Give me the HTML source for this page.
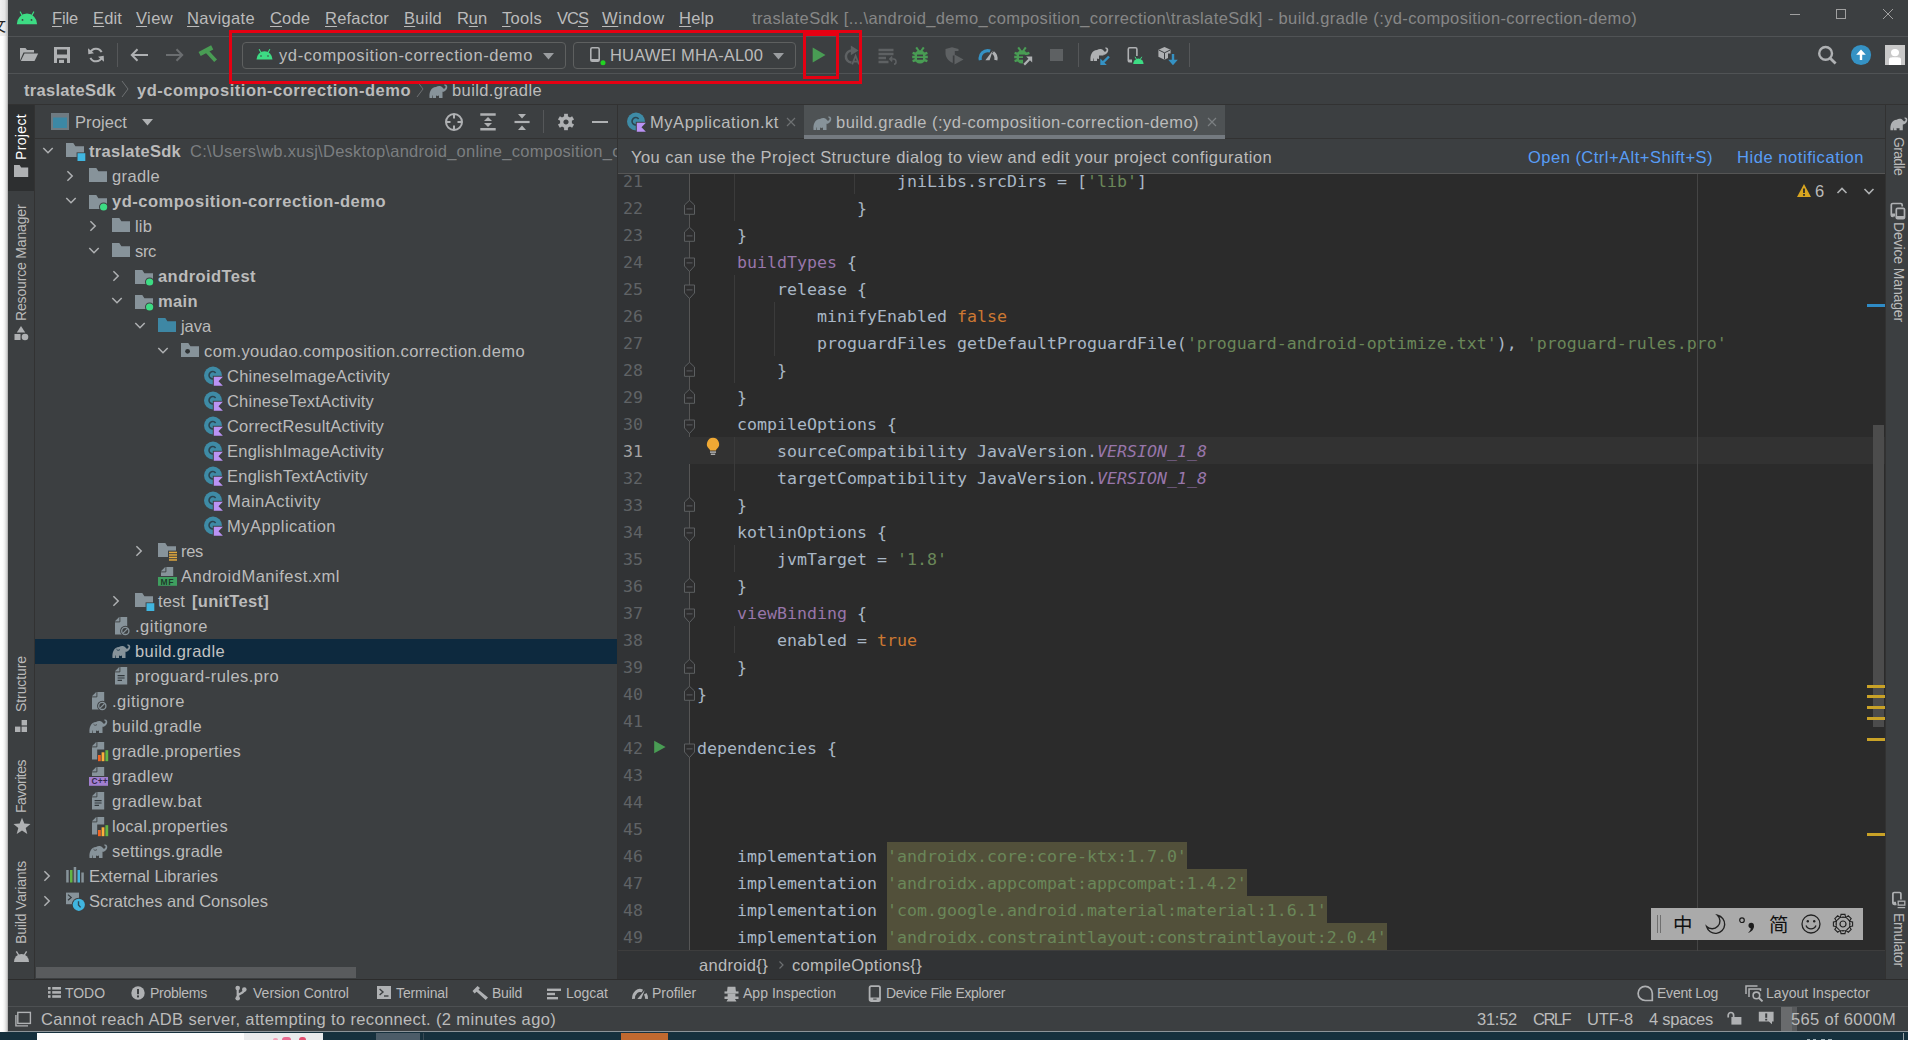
<!DOCTYPE html>
<html><head><meta charset="utf-8"><title>traslateSdk - build.gradle</title><style>
html,body{margin:0;padding:0;background:#3c3f41;}
body{width:1908px;height:1040px;overflow:hidden;position:relative;font-family:"Liberation Sans",sans-serif;}
#r{position:absolute;left:0;top:0;width:1908px;height:1040px;overflow:hidden;}
#r div,#r span,#r svg{position:absolute;}
#r span.t{line-height:24px;height:24px;white-space:pre;}
#r span.c{font-family:"DejaVu Sans Mono","Liberation Mono",monospace;font-size:16.6px;line-height:27px;height:27px;white-space:pre;color:#a9b7c6;letter-spacing:0.007px}
#r span.c i{position:static}
#r span.t u{text-decoration-thickness:1px;text-underline-offset:2px}
</style></head><body><div id="r">
<div style="left:0px;top:0px;width:1908px;height:1040px;background:#3c3f41;"></div>
<div style="left:0px;top:0px;width:8px;height:1032px;background:#ffffff;background:linear-gradient(to right,#ffffff 0,#fdfdfd 35%,#efefef 60%,#d4d4d4 82%,#a8a8a8 100%)"></div>
<div style="left:0px;top:0px;width:8px;height:36px;background:#e9e9e9;background:linear-gradient(to right,#f0f0f0 0,#e6e6e6 60%,#b5b5b5 100%)"></div>
<div style="left:0;top:14px;width:7px;height:22px;overflow:hidden"><span class="t" style="left:-9px;top:0;font-size:15px;color:#222;font-family:'Liberation Sans','Noto Sans CJK SC',sans-serif">文</span></div>
<div style="left:8px;top:36px;width:1900px;height:1px;background:#505355;"></div>
<div style="left:8px;top:73px;width:1900px;height:1px;background:#505355;"></div>
<div style="left:8px;top:104px;width:1900px;height:1px;background:#323232;"></div>
<div style="left:8px;top:105px;width:27px;height:875px;background:#3c3f41;"></div>
<div style="left:8px;top:105px;width:27px;height:86px;background:#2d2f30;"></div>
<div style="left:34px;top:105px;width:1px;height:875px;background:#323232;"></div>
<div style="left:35px;top:138px;width:582px;height:1px;background:#323232;"></div>
<div style="left:617px;top:105px;width:1px;height:875px;background:#323232;"></div>
<div style="left:618px;top:174px;width:1267px;height:777px;background:#2b2b2b;"></div>
<div style="left:618px;top:174px;width:72px;height:777px;background:#313335;"></div>
<div style="left:689px;top:174px;width:1px;height:777px;background:#555555;"></div>
<div style="left:618px;top:138px;width:1267px;height:1px;background:#323232;"></div>
<div style="left:804px;top:105px;width:421px;height:34px;background:#4e5254;"></div>
<div style="left:804px;top:135px;width:421px;height:4px;background:#747a80;"></div>
<div style="left:618px;top:173px;width:1267px;height:1px;background:#555555;"></div>
<div style="left:1885px;top:105px;width:1px;height:875px;background:#323232;"></div>
<div style="left:618px;top:950px;width:1267px;height:1px;background:#3d3d3d;"></div>
<div style="left:618px;top:951px;width:1267px;height:28px;background:#313335;"></div>
<div style="left:8px;top:979px;width:1900px;height:1px;background:#2c2c2c;"></div>
<div style="left:8px;top:1006px;width:1900px;height:1px;background:#4d5052;"></div>
<div style="left:0px;top:1032px;width:1908px;height:8px;background:#16303d;"></div>
<div style="left:8px;top:1031px;width:1900px;height:1px;background:#8d9499;"></div>
<div style="left:37px;top:1033px;width:207px;height:7px;background:#fdfdfd;"></div>
<div style="left:244px;top:1033px;width:79px;height:7px;background:#e9eaec;"></div>
<div style="left:273px;top:1038px;width:5px;height:2px;background:#f3a0b8;border-radius:2px 2px 0 0"></div>
<div style="left:282px;top:1037px;width:9px;height:3px;background:#e86a90;border-radius:4px 4px 0 0"></div>
<div style="left:299px;top:1037px;width:7px;height:3px;background:#e24d6f;border-radius:3px 3px 0 0"></div>
<div style="left:376px;top:1033px;width:44px;height:7px;background:#4c5c68;"></div>
<div style="left:423px;top:1033px;width:1px;height:7px;background:#3a4a55;"></div>
<div style="left:621px;top:1033px;width:47px;height:7px;background:#c1692f;"></div>
<div style="left:1903px;top:1033px;width:1px;height:7px;background:#9aa3a8;"></div>
<div style="left:1807px;top:1039px;width:3px;height:1px;background:#9fb0b8;"></div>
<div style="left:1813px;top:1039px;width:3px;height:1px;background:#9fb0b8;"></div>
<div style="left:1821px;top:1039px;width:4px;height:1px;background:#9fb0b8;"></div>
<div style="left:1828px;top:1039px;width:4px;height:1px;background:#9fb0b8;"></div>
<div style="left:35px;top:639px;width:582px;height:25px;background:#0d293e;"></div>
<svg style="left:41.9px;top:145.0px;" width="12" height="12" viewBox="0 0 12 12"><path d="M1.3 3 L6 7.8 L10.7 3" fill="none" stroke="#afb1b3" stroke-width="1.5"/></svg>
<span class="t" style="left:89px;top:139.0px;font-size:16.5px;letter-spacing:0.277px;color:#bbbbbb;font-weight:bold;">traslateSdk</span>
<div style="left:190px;top:139.0px;width:427px;height:24px;overflow:hidden"><span class="t" style="left:0;top:0;font-size:16.5px;color:#7b7e80;letter-spacing:0.27px">C:\Users\wb.xusj\Desktop\android_online_composition_c</span></div>
<svg style="left:63.7px;top:169.6px;" width="12" height="12" viewBox="0 0 12 12"><path d="M3.4 1.3 L8.2 6 L3.4 10.7" fill="none" stroke="#afb1b3" stroke-width="1.5"/></svg>
<span class="t" style="left:112px;top:164.0px;font-size:16.5px;letter-spacing:0.356px;color:#bbbbbb;">gradle</span>
<svg style="left:64.9px;top:195.0px;" width="12" height="12" viewBox="0 0 12 12"><path d="M1.3 3 L6 7.8 L10.7 3" fill="none" stroke="#afb1b3" stroke-width="1.5"/></svg>
<span class="t" style="left:112px;top:189.0px;font-size:16.5px;letter-spacing:0.517px;color:#bbbbbb;font-weight:bold;">yd-composition-correction-demo</span>
<svg style="left:86.7px;top:219.6px;" width="12" height="12" viewBox="0 0 12 12"><path d="M3.4 1.3 L8.2 6 L3.4 10.7" fill="none" stroke="#afb1b3" stroke-width="1.5"/></svg>
<span class="t" style="left:135px;top:214.0px;font-size:16.5px;letter-spacing:0.164px;color:#bbbbbb;">lib</span>
<svg style="left:87.9px;top:245.0px;" width="12" height="12" viewBox="0 0 12 12"><path d="M1.3 3 L6 7.8 L10.7 3" fill="none" stroke="#afb1b3" stroke-width="1.5"/></svg>
<span class="t" style="left:135px;top:239.0px;font-size:16.5px;letter-spacing:-0.331px;color:#bbbbbb;">src</span>
<svg style="left:109.7px;top:269.59999999999997px;" width="12" height="12" viewBox="0 0 12 12"><path d="M3.4 1.3 L8.2 6 L3.4 10.7" fill="none" stroke="#afb1b3" stroke-width="1.5"/></svg>
<span class="t" style="left:158px;top:264.0px;font-size:16.5px;letter-spacing:0.437px;color:#bbbbbb;font-weight:bold;">androidTest</span>
<svg style="left:110.9px;top:295.0px;" width="12" height="12" viewBox="0 0 12 12"><path d="M1.3 3 L6 7.8 L10.7 3" fill="none" stroke="#afb1b3" stroke-width="1.5"/></svg>
<span class="t" style="left:158px;top:289.0px;font-size:16.5px;letter-spacing:0.373px;color:#bbbbbb;font-weight:bold;">main</span>
<svg style="left:133.9px;top:320.0px;" width="12" height="12" viewBox="0 0 12 12"><path d="M1.3 3 L6 7.8 L10.7 3" fill="none" stroke="#afb1b3" stroke-width="1.5"/></svg>
<span class="t" style="left:181px;top:314.0px;font-size:16.5px;letter-spacing:-0.067px;color:#bbbbbb;">java</span>
<svg style="left:156.9px;top:345.0px;" width="12" height="12" viewBox="0 0 12 12"><path d="M1.3 3 L6 7.8 L10.7 3" fill="none" stroke="#afb1b3" stroke-width="1.5"/></svg>
<span class="t" style="left:204px;top:339.0px;font-size:16.5px;letter-spacing:0.411px;color:#bbbbbb;">com.youdao.composition.correction.demo</span>
<span class="t" style="left:227px;top:364.0px;font-size:16.5px;letter-spacing:0.218px;color:#bbbbbb;">ChineseImageActivity</span>
<span class="t" style="left:227px;top:389.0px;font-size:16.5px;letter-spacing:0.208px;color:#bbbbbb;">ChineseTextActivity</span>
<span class="t" style="left:227px;top:414.0px;font-size:16.5px;letter-spacing:0.185px;color:#bbbbbb;">CorrectResultActivity</span>
<span class="t" style="left:227px;top:439.0px;font-size:16.5px;letter-spacing:0.239px;color:#bbbbbb;">EnglishImageActivity</span>
<span class="t" style="left:227px;top:464.0px;font-size:16.5px;letter-spacing:0.230px;color:#bbbbbb;">EnglishTextActivity</span>
<span class="t" style="left:227px;top:489.0px;font-size:16.5px;letter-spacing:0.499px;color:#bbbbbb;">MainActivity</span>
<span class="t" style="left:227px;top:514.0px;font-size:16.5px;letter-spacing:0.484px;color:#bbbbbb;">MyApplication</span>
<svg style="left:132.7px;top:544.6px;" width="12" height="12" viewBox="0 0 12 12"><path d="M3.4 1.3 L8.2 6 L3.4 10.7" fill="none" stroke="#afb1b3" stroke-width="1.5"/></svg>
<span class="t" style="left:181px;top:539.0px;font-size:16.5px;letter-spacing:-0.307px;color:#bbbbbb;">res</span>
<span class="t" style="left:181px;top:564.0px;font-size:16.5px;letter-spacing:0.502px;color:#bbbbbb;">AndroidManifest.xml</span>
<svg style="left:109.7px;top:594.6px;" width="12" height="12" viewBox="0 0 12 12"><path d="M3.4 1.3 L8.2 6 L3.4 10.7" fill="none" stroke="#afb1b3" stroke-width="1.5"/></svg>
<span class="t" style="left:158px;top:589.0px;font-size:16.5px;letter-spacing:0.102px;color:#bbbbbb;">test</span>
<span class="t" style="left:192px;top:589.0px;font-size:16.5px;letter-spacing:0.308px;color:#bbbbbb;font-weight:bold;">[unitTest]</span>
<span class="t" style="left:135px;top:614.0px;font-size:16.5px;letter-spacing:0.513px;color:#bbbbbb;">.gitignore</span>
<span class="t" style="left:135px;top:639.0px;font-size:16.5px;letter-spacing:0.391px;color:#c2c2c2;">build.gradle</span>
<span class="t" style="left:135px;top:664.0px;font-size:16.5px;letter-spacing:0.460px;color:#bbbbbb;">proguard-rules.pro</span>
<span class="t" style="left:112px;top:689.0px;font-size:16.5px;letter-spacing:0.513px;color:#bbbbbb;">.gitignore</span>
<span class="t" style="left:112px;top:714.0px;font-size:16.5px;letter-spacing:0.391px;color:#bbbbbb;">build.gradle</span>
<span class="t" style="left:112px;top:739.0px;font-size:16.5px;letter-spacing:0.305px;color:#bbbbbb;">gradle.properties</span>
<span class="t" style="left:112px;top:764.0px;font-size:16.5px;letter-spacing:0.460px;color:#bbbbbb;">gradlew</span>
<span class="t" style="left:112px;top:789.0px;font-size:16.5px;letter-spacing:0.510px;color:#bbbbbb;">gradlew.bat</span>
<span class="t" style="left:112px;top:814.0px;font-size:16.5px;letter-spacing:0.257px;color:#bbbbbb;">local.properties</span>
<span class="t" style="left:112px;top:839.0px;font-size:16.5px;letter-spacing:0.246px;color:#bbbbbb;">settings.gradle</span>
<svg style="left:40.7px;top:869.6px;" width="12" height="12" viewBox="0 0 12 12"><path d="M3.4 1.3 L8.2 6 L3.4 10.7" fill="none" stroke="#afb1b3" stroke-width="1.5"/></svg>
<span class="t" style="left:89px;top:864.0px;font-size:16.5px;letter-spacing:0.034px;color:#bbbbbb;">External Libraries</span>
<svg style="left:40.7px;top:894.6px;" width="12" height="12" viewBox="0 0 12 12"><path d="M3.4 1.3 L8.2 6 L3.4 10.7" fill="none" stroke="#afb1b3" stroke-width="1.5"/></svg>
<span class="t" style="left:89px;top:889.0px;font-size:16.5px;letter-spacing:0.007px;color:#bbbbbb;">Scratches and Consoles</span>
<div style="left:36px;top:967px;width:320px;height:11px;background:#595b5d;"></div>
<svg style="left:14px;top:9px;" width="26" height="18" viewBox="0 0 26 18"><path d="M2.8 15.2 A10.15 10.6 0 0 1 23.1 15.2 Z" fill="#3ddc84"/><path d="M6.3 3 L8.6 7.2 M19.7 3 L17.4 7.2" stroke="#3ddc84" stroke-width="1.2" stroke-linecap="round"/><circle cx="8.5" cy="10.9" r="0.9" fill="#3c3f41"/><circle cx="17.5" cy="10.9" r="0.9" fill="#3c3f41"/></svg>
<svg style="left:19px;top:46px;" width="21" height="17" viewBox="0 0 21 17"><path d="M1 2 H6.5 L8 4 H15 V6.5 H4.5 L1 14.5 Z" fill="#afb1b3"/><path d="M5.5 7.5 H19.2 L15.5 15 H1.8 Z" fill="#afb1b3"/></svg>
<svg style="left:53px;top:46px;" width="18" height="18" viewBox="0 0 18 18"><path d="M1 1 H17 V17 H1 Z" fill="#afb1b3"/><rect x="4" y="3.5" width="10" height="5" fill="#3c3f41"/><rect x="4" y="12.3" width="10" height="4.7" fill="#3c3f41"/><rect x="6" y="13.8" width="5" height="3.2" fill="#afb1b3"/></svg>
<svg style="left:86px;top:45px;" width="20" height="20" viewBox="0 0 20 20"><path d="M15.6 7.2 A6.2 6.2 0 0 0 4.2 7.6" fill="none" stroke="#afb1b3" stroke-width="2"/><path d="M2 3.2 L2.3 9.3 L8 8.2 Z" fill="#afb1b3"/><path d="M4.4 12.8 A6.2 6.2 0 0 0 15.8 12.4" fill="none" stroke="#afb1b3" stroke-width="2"/><path d="M18 16.8 L17.7 10.7 L12 11.8 Z" fill="#afb1b3"/></svg>
<svg style="left:129px;top:46px;" width="21" height="18" viewBox="0 0 21 18"><path d="M3 9 H19" stroke="#afb1b3" stroke-width="2"/><path d="M8.5 3.2 L2.8 9 L8.5 14.8" fill="none" stroke="#afb1b3" stroke-width="2"/></svg>
<svg style="left:164px;top:46px;" width="21" height="18" viewBox="0 0 21 18"><path d="M2 9 H18" stroke="#6b6e70" stroke-width="2"/><path d="M12.5 3.2 L18.2 9 L12.5 14.8" fill="none" stroke="#6b6e70" stroke-width="2"/></svg>
<svg style="left:196px;top:44px;" width="23" height="22" viewBox="0 0 23 22"><path d="M3.6 10 L16.2 3.4" stroke="#499c54" stroke-width="4.6"/><path d="M10.6 7 L19.6 16.8" stroke="#499c54" stroke-width="3.8"/></svg>
<svg style="left:255px;top:47px;" width="19" height="15" viewBox="0 0 19 15"><path d="M1.5 12.5 A8 8.3 0 0 1 17.5 12.5 Z" fill="#3ddc84"/><path d="M4.3 2.6 L6.2 6 M14.7 2.6 L12.8 6" stroke="#3ddc84" stroke-width="1.1" stroke-linecap="round"/><circle cx="6" cy="9" r="0.8" fill="#3c3f41"/><circle cx="13" cy="9" r="0.8" fill="#3c3f41"/></svg>
<svg style="left:588px;top:46px;" width="18" height="20" viewBox="0 0 18 20"><rect x="2.8" y="1.8" width="8.4" height="13.4" rx="1.4" fill="none" stroke="#afb1b3" stroke-width="1.6"/><path d="M3 13 H11 V15 H3 Z" fill="#afb1b3"/><circle cx="15" cy="16.8" r="3.2" fill="#3c3f41"/><circle cx="15" cy="16.8" r="2.5" fill="#22d322"/></svg>
<svg style="left:811px;top:46px;" width="17" height="18" viewBox="0 0 17 18"><path d="M1.7 1.5 L14.5 9 L1.7 16.5 Z" fill="#499c54"/></svg>
<svg style="left:839.5px;top:44px;" width="22" height="22" viewBox="0 0 22 22"><path d="M12.5 6.4 A6 6 0 1 0 11.5 18.6" fill="none" stroke="#5e6163" stroke-width="2.5"/><path d="M10.8 1.6 L18.6 6.4 L10.8 11.2 Z" fill="#5e6163"/><path d="M12.2 20.4 L15.6 11.8 L19 20.4 M13.6 17.6 H17.6" fill="none" stroke="#5e6163" stroke-width="1.7"/></svg>
<svg style="left:877px;top:47px;" width="21" height="19" viewBox="0 0 21 19"><path d="M1.5 3 H16.5 M1.5 7 H16.5 M1.5 11 H9 M1.5 15 H11.5" stroke="#5e6163" stroke-width="2.5"/><path d="M17 17.2 C20 16.8 19.6 12 16.5 12 H13 M15.2 9.6 L12.8 12 L15.2 14.4" fill="none" stroke="#5e6163" stroke-width="1.5"/></svg>
<svg style="left:912px;top:45.5px;" width="16" height="19" viewBox="0 0 16 19"><rect x="2.6" y="4.2" width="10.8" height="13.4" rx="5.2" ry="5.6" fill="#499c54"/><path d="M4.2 1.4 L6.8 5 M11.8 1.4 L9.2 5" stroke="#499c54" stroke-width="2.1"/><path d="M0.6 6.8 L4 8 M0.2 11 H4 M0.6 15.2 L4 14 M15.4 6.8 L12 8 M15.8 11 H12 M15.4 15.2 L12 14" stroke="#499c54" stroke-width="2.4"/><rect x="5" y="8.6" width="6" height="1.7" fill="#3c3f41"/><rect x="5" y="12" width="6" height="1.7" fill="#3c3f41"/></svg>
<svg style="left:944px;top:46px;" width="21" height="20" viewBox="0 0 21 20"><path d="M1.5 3 L8 1.2 L14.5 3 V5 H10.8 V9.5 H8.8 V17 C4.5 15 1.5 11.5 1.5 7 Z" fill="#5e6163"/><path d="M10.5 8.5 L19.5 13.5 L10.5 18.5 Z" fill="#5e6163"/></svg>
<svg style="left:978px;top:47px;" width="21" height="15" viewBox="0 0 21 15"><path d="M2.4 13.2 A7.6 7.6 0 0 1 12.2 4" fill="none" stroke="#3592c4" stroke-width="3.2"/><path d="M15 5.4 A7.6 7.6 0 0 1 17.8 13.2" fill="none" stroke="#afb1b3" stroke-width="3.2"/><path d="M7.4 13.2 L14.8 3.4 L11.6 13.2 Z" fill="#afb1b3"/></svg>
<svg style="left:1014px;top:45.5px;" width="20" height="20" viewBox="0 0 20 20"><g><rect x="2.6" y="4.2" width="10.8" height="13.4" rx="5.2" ry="5.6" fill="#499c54"/><path d="M4.2 1.4 L6.8 5 M11.8 1.4 L9.2 5" stroke="#499c54" stroke-width="2.1"/><path d="M0.6 6.8 L4 8 M0.2 11 H4 M0.6 15.2 L4 14 M15.4 6.8 L12 8 M15.8 11 H12 M15.4 15.2 L12 14" stroke="#499c54" stroke-width="2.4"/><rect x="5" y="8.6" width="6" height="1.7" fill="#3c3f41"/><rect x="5" y="12" width="6" height="1.7" fill="#3c3f41"/></g><rect x="9" y="9" width="11" height="11" fill="#3c3f41"/><path d="M10.2 18.6 L16.5 12.3" stroke="#afb1b3" stroke-width="2.2"/><path d="M12.2 10.6 H18.2 V16.6 Z" fill="#afb1b3"/></svg>
<div style="left:1050px;top:49px;width:12.5px;height:12.2px;background:#5e6163;"></div>
<svg style="left:1090px;top:47px;" width="21" height="19" viewBox="0 0 21 19"><path d="M0.5 14 C0 8 2 3.5 7 3 C9 1.5 12 1.5 13.5 3.5 C14.5 5 15.5 5 16.3 3.8 C17 2.8 16.5 1.6 15.5 1.8 L15.2 0.6 C17.5 0 19 2 18 4.5 C17 7 14.5 8 13.5 7.8 L13.5 14 H10 V11.5 C9 12 8 12 7 11.5 V14 H4 V11 C3.5 11.5 3.3 13 3.3 14 Z" fill="#afb1b3"/><rect x="9" y="8.5" width="12" height="10.5" fill="#3c3f41"/><path d="M19 9.5 L12.5 16" stroke="#3592c4" stroke-width="2.4"/><path d="M10.3 11.5 V18 H16.8 Z" fill="#3592c4"/></svg>
<svg style="left:1126px;top:46px;" width="19" height="20" viewBox="0 0 19 20"><rect x="2.3" y="1.8" width="8.6" height="14" rx="1.4" fill="none" stroke="#afb1b3" stroke-width="1.6"/><path d="M2.5 13.5 H7 V15.5 H2.5Z" fill="#afb1b3"/><rect x="6" y="10" width="13" height="9" fill="#3c3f41"/><path d="M7.2 18 A5.2 5.4 0 0 1 17.6 18 Z" fill="#3ddc84"/><path d="M9 10.8 L10.3 13 M15.8 10.8 L14.5 13" stroke="#3ddc84" stroke-width="1"/></svg>
<svg style="left:1157px;top:45.5px;" width="22" height="21" viewBox="0 0 22 21"><path d="M7.5 1 L13.6 3.8 V10.8 L7.5 13.8 L1.4 10.8 V3.8 Z" fill="#afb1b3"/><path d="M1.8 4 L7.5 6.8 L13.2 4 M7.5 6.8 V13.4" fill="none" stroke="#3c3f41" stroke-width="1"/><rect x="11" y="7.5" width="10" height="12" fill="#3c3f41"/><path d="M16 8 V15" stroke="#3592c4" stroke-width="2.4"/><path d="M11.2 13.8 H20.8 L16 19.3 Z" fill="#3592c4"/></svg>
<svg style="left:1815px;top:43px;" width="24" height="24" viewBox="0 0 24 24"><circle cx="10.6" cy="10.4" r="6.4" fill="none" stroke="#afb1b3" stroke-width="2.4"/><path d="M15.2 15.2 L20.6 20.6" stroke="#afb1b3" stroke-width="2.8"/></svg>
<svg style="left:1850px;top:44px;" width="22" height="22" viewBox="0 0 22 22"><circle cx="11" cy="11" r="10.1" fill="#3592c4"/><path d="M11 5.5 L15.8 10.8 H12.2 V16 H9.8 V10.8 H6.2 Z" fill="#ffffff"/></svg>
<svg style="left:1885px;top:45px;" width="20" height="20" viewBox="0 0 20 20"><rect width="20" height="20" fill="#c9c9c9"/><ellipse cx="10" cy="7.6" rx="4" ry="3.7" fill="#ffffff"/><path d="M4 20 V14.5 C4 12.5 6 12.3 10 12.3 C14 12.3 16 12.5 16 14.5 V20 Z" fill="#ffffff"/></svg>
<svg style="left:428.5px;top:83.8px;" width="19" height="14" viewBox="0 0 19 14"><path d="M0.5 14 C0 8 2 3.5 7 3 C9 1.5 12 1.5 13.5 3.5 C14.5 5 15.5 5 16.3 3.8 C17 2.8 16.5 1.6 15.5 1.8 L15.2 0.6 C17.5 0 19 2 18 4.5 C17 7 14.5 8 13.5 7.8 L13.5 14 H10 V11.5 C9 12 8 12 7 11.5 V14 H4 V11 C3.5 11.5 3.3 13 3.3 14 Z" fill="#87939a"/></svg>
<svg style="left:627px;top:110px;" width="20" height="23" viewBox="0 0 20 23"><circle cx="9" cy="11.5" r="9" fill="#3e8ba6"/><path d="M11.6 8.9 A3.7 3.7 0 1 0 11.6 13.6" fill="none" stroke="#2c4450" stroke-width="1.6"/><path d="M8.8 11.8 H19.2 V22.6 H8.8 Z" fill="#3c3f41"/><path d="M9.8 12.8 H18.9 L14.5 17.2 L18.9 21.7 H9.8 Z" fill="#bb93f5"/></svg>
<svg style="left:813px;top:115.5px;" width="19" height="14" viewBox="0 0 19 14"><path d="M0.5 14 C0 8 2 3.5 7 3 C9 1.5 12 1.5 13.5 3.5 C14.5 5 15.5 5 16.3 3.8 C17 2.8 16.5 1.6 15.5 1.8 L15.2 0.6 C17.5 0 19 2 18 4.5 C17 7 14.5 8 13.5 7.8 L13.5 14 H10 V11.5 C9 12 8 12 7 11.5 V14 H4 V11 C3.5 11.5 3.3 13 3.3 14 Z" fill="#87939a"/></svg>
<svg style="left:51px;top:113px;" width="18" height="17" viewBox="0 0 18 17"><rect x="0" y="0" width="18" height="17" fill="#6f7b82"/><rect x="2" y="4.5" width="14" height="10.5" fill="#3c88a5"/></svg>
<svg style="left:443px;top:111px;" width="22" height="22" viewBox="0 0 22 22"><circle cx="11" cy="11" r="8" fill="none" stroke="#afb1b3" stroke-width="2"/><path d="M11 3 V7.5 M11 14.5 V19 M3 11 H7.5 M14.5 11 H19" stroke="#afb1b3" stroke-width="2"/></svg>
<svg style="left:479px;top:112px;" width="18" height="20" viewBox="0 0 18 20"><path d="M1.3 2.5 H16.7 M1.3 17.3 H16.7" stroke="#afb1b3" stroke-width="2.6"/><path d="M5 9 L9 5 L13 9 Z M5 11 L9 15 L13 11 Z" fill="#afb1b3"/></svg>
<svg style="left:513px;top:112px;" width="18" height="20" viewBox="0 0 18 20"><path d="M1.5 10 H16.6" stroke="#afb1b3" stroke-width="2.2"/><path d="M5 2 H13 L9 6.4 Z M5 18 H13 L9 13.6 Z" fill="#afb1b3"/></svg>
<div style="left:543px;top:110px;width:1px;height:23px;background:#555759;"></div>
<svg style="left:556px;top:112px;" width="20" height="20" viewBox="0 0 20 20"><g transform="translate(10,10)"><rect x="-1.9" y="-8.2" width="3.8" height="4" transform="rotate(0)" fill="#afb1b3"/><rect x="-1.9" y="-8.2" width="3.8" height="4" transform="rotate(60)" fill="#afb1b3"/><rect x="-1.9" y="-8.2" width="3.8" height="4" transform="rotate(120)" fill="#afb1b3"/><rect x="-1.9" y="-8.2" width="3.8" height="4" transform="rotate(180)" fill="#afb1b3"/><rect x="-1.9" y="-8.2" width="3.8" height="4" transform="rotate(240)" fill="#afb1b3"/><rect x="-1.9" y="-8.2" width="3.8" height="4" transform="rotate(300)" fill="#afb1b3"/><circle r="4.3" fill="none" stroke="#afb1b3" stroke-width="3.4"/></g></svg>
<div style="left:592px;top:121px;width:16px;height:2px;background:#afb1b3;"></div>
<svg style="left:14px;top:165px;" width="15" height="12" viewBox="0 0 15 12"><path d="M0 0 H5.6 L7.2 2.6 H14.2 V12 H0 Z" fill="#afb1b3"/></svg>
<svg style="left:14px;top:326px;" width="15" height="15" viewBox="0 0 15 15"><path d="M7 0 L11.2 6.4 H2.8 Z" fill="#afb1b3"/><rect x="0.5" y="8" width="6" height="6" fill="#afb1b3"/><circle cx="11" cy="11" r="3.3" fill="#afb1b3"/></svg>
<svg style="left:15px;top:720px;" width="13" height="13" viewBox="0 0 13 13"><rect x="6.6" y="0" width="5.4" height="5.4" fill="#afb1b3"/><rect x="0" y="6.6" width="5.4" height="5.4" fill="#afb1b3"/><rect x="6.6" y="6.6" width="5.4" height="5.4" fill="#afb1b3"/></svg>
<svg style="left:12.5px;top:817px;" width="18" height="18" viewBox="0 0 18 18"><path d="M9 0.8 L11.3 6.6 L17.5 7 L12.7 10.9 L14.3 17 L9 13.6 L3.7 17 L5.3 10.9 L0.5 7 L6.7 6.6 Z" fill="#afb1b3"/></svg>
<svg style="left:13px;top:949px;" width="17" height="14" viewBox="0 0 17 14"><path d="M1 13 A7.5 8 0 0 1 16 13 Z" fill="#afb1b3"/><path d="M3.4 2.4 L5.6 6 M13.6 2.4 L11.4 6" stroke="#afb1b3" stroke-width="1.4"/></svg>
<svg style="left:1889.5px;top:117px;" width="18" height="13.5" viewBox="0 0 19 14.2"><path d="M0.5 14 C0 8 2 3.5 7 3 C9 1.5 12 1.5 13.5 3.5 C14.5 5 15.5 5 16.3 3.8 C17 2.8 16.5 1.6 15.5 1.8 L15.2 0.6 C17.5 0 19 2 18 4.5 C17 7 14.5 8 13.5 7.8 L13.5 14 H10 V11.5 C9 12 8 12 7 11.5 V14 H4 V11 C3.5 11.5 3.3 13 3.3 14 Z" fill="#afb1b3"/></svg>
<svg style="left:1890px;top:202px;" width="17" height="18" viewBox="0 0 17 18"><path d="M3.5 14.5 H2.8 A1.5 1.5 0 0 1 1.3 13 V3 A1.5 1.5 0 0 1 2.8 1.5 H10.7 A1.5 1.5 0 0 1 12.2 3 V4.5" fill="none" stroke="#afb1b3" stroke-width="1.7"/><rect x="6.3" y="6.3" width="8.2" height="10.4" rx="1.3" fill="none" stroke="#afb1b3" stroke-width="1.7"/><path d="M6.5 14 H14.5 V16 H6.5 Z" fill="#afb1b3"/><path d="M1.3 11.5 H5 V14.5 H1.3Z" fill="#afb1b3"/></svg>
<svg style="left:1890px;top:890px;" width="18" height="20" viewBox="0 0 18 20"><path d="M6.5 14.3 H4.2 A1.3 1.3 0 0 1 2.9 13 V3.8 A1.3 1.3 0 0 1 4.2 2.5 H9.6 A1.3 1.3 0 0 1 10.9 3.8 V9.5" fill="none" stroke="#afb1b3" stroke-width="1.7"/><path d="M2.9 11.8 H6 V14.3 H2.9 Z" fill="#afb1b3"/><rect x="8.2" y="11.2" width="6.6" height="3.9" fill="none" stroke="#afb1b3" stroke-width="1.3"/><path d="M7.6 17.6 H15.2" stroke="#afb1b3" stroke-width="1.2"/></svg>
<svg style="left:48px;top:987px;" width="13" height="11" viewBox="0 0 13 11"><rect x="0" y="0.0" width="2.6" height="2.6" fill="#afb1b3"/><rect x="4.2" y="0.0" width="8.8" height="2.6" fill="#afb1b3"/><rect x="0" y="4.1" width="2.6" height="2.6" fill="#afb1b3"/><rect x="4.2" y="4.1" width="8.8" height="2.6" fill="#afb1b3"/><rect x="0" y="8.2" width="2.6" height="2.6" fill="#afb1b3"/><rect x="4.2" y="8.2" width="8.8" height="2.6" fill="#afb1b3"/></svg>
<svg style="left:131px;top:985.5px;" width="14" height="14" viewBox="0 0 14 14"><circle cx="7" cy="7" r="6.7" fill="#afb1b3"/><rect x="6" y="3" width="2" height="5.2" fill="#3c3f41"/><rect x="6" y="9.4" width="2" height="2" fill="#3c3f41"/></svg>
<svg style="left:234px;top:985px;" width="14" height="16" viewBox="0 0 14 16"><circle cx="3.7" cy="3" r="2.3" fill="#afb1b3"/><circle cx="3.7" cy="13.2" r="2.3" fill="#afb1b3"/><circle cx="10.3" cy="4.6" r="2.3" fill="#afb1b3"/><path d="M3.7 3 V13 M10.3 4.6 C10.3 9 3.7 8 3.7 11.5" fill="none" stroke="#afb1b3" stroke-width="2.2"/></svg>
<svg style="left:377px;top:986px;" width="14" height="13" viewBox="0 0 14 13"><rect width="14" height="13" fill="#afb1b3"/><path d="M2.6 3 L6 6 L2.6 9" fill="none" stroke="#3c3f41" stroke-width="1.4"/><path d="M7 10 H11.5" stroke="#3c3f41" stroke-width="1.4"/></svg>
<svg style="left:471px;top:985px;" width="18" height="16" viewBox="0 0 18 16"><path d="M1.5 6 L6.5 1 L9 3 L7.5 4.7 L17 12.6 L14.7 15 L5.6 6.8 L3.6 8.5 Z" fill="#afb1b3"/></svg>
<svg style="left:547px;top:988px;" width="14" height="12" viewBox="0 0 14 12"><rect x="0" y="0.6" width="14" height="2.4" fill="#afb1b3"/><rect x="0" y="4.8" width="8" height="2.4" fill="#afb1b3"/><rect x="0" y="9" width="11" height="2.4" fill="#afb1b3"/></svg>
<svg style="left:631px;top:987px;" width="18" height="13" viewBox="0 0 18 13"><path d="M2.5 11.9 A6.5 8.3 0 0 1 11.4 4 M14.3 6.8 A6.5 8.3 0 0 1 15.5 11.9" fill="none" stroke="#afb1b3" stroke-width="3"/><path d="M6.4 11.9 L13.8 3 L10.2 11.9 Z" fill="#afb1b3"/></svg>
<svg style="left:723.5px;top:985.5px;" width="15" height="16" viewBox="0 0 15 16"><path d="M3.6 0.8 H11.4 L12 6 H3 Z" fill="#afb1b3"/><rect x="0.5" y="5.4" width="14" height="2.2" fill="#afb1b3"/><path d="M3.6 7.6 H11.4 V10.5 H14.5 V13 H11 L12.5 15.5 H2.5 L4 13 H0.5 V10.5 H3.6 Z" fill="#afb1b3"/></svg>
<svg style="left:867.5px;top:984.5px;" width="14" height="17" viewBox="0 0 14 17"><rect x="1.6" y="1.2" width="10.4" height="14.8" rx="1.6" fill="none" stroke="#afb1b3" stroke-width="1.8"/><path d="M2 12.5 H12 V15.5 H2Z" fill="#afb1b3"/><rect x="5.2" y="13.6" width="3.4" height="1" fill="#3c3f41"/></svg>
<svg style="left:1636px;top:985px;" width="18" height="17" viewBox="0 0 18 17"><path d="M9.2 1.3 A7.1 7.1 0 1 0 9.2 15.5 H16.3 V8.4 A7.1 7.1 0 0 0 9.2 1.3 Z" fill="none" stroke="#afb1b3" stroke-width="1.7"/></svg>
<svg style="left:1745px;top:985px;" width="19" height="17" viewBox="0 0 19 17"><path d="M1 9 V1 H12.5 M4 12 V4 H15.5 V6" fill="none" stroke="#afb1b3" stroke-width="1.5"/><circle cx="11.4" cy="10.4" r="3.3" fill="none" stroke="#afb1b3" stroke-width="1.6"/><path d="M13.8 12.8 L17.5 16.4" stroke="#afb1b3" stroke-width="1.9"/></svg>
<svg style="left:15px;top:1011px;" width="17" height="16" viewBox="0 0 17 16"><rect x="2.8" y="1.4" width="12.6" height="11" fill="none" stroke="#afb1b3" stroke-width="1.4"/><path d="M0.9 4 V14.9 H13" fill="none" stroke="#afb1b3" stroke-width="1.4"/></svg>
<svg style="left:1727px;top:1011px;" width="15" height="14" viewBox="0 0 15 14"><rect x="4.4" y="6" width="10" height="7.6" fill="#afb1b3"/><path d="M1.2 6.5 V4.2 A2.7 2.7 0 0 1 6.6 4.2 V6.5" fill="none" stroke="#afb1b3" stroke-width="1.7"/></svg>
<svg style="left:1758px;top:1011px;" width="17" height="14" viewBox="0 0 17 14"><path d="M0.8 0.8 H15.6 V10.6 H14 V13.2 L10.8 10.6 H0.8 Z" fill="#afb1b3"/><rect x="7.2" y="2.4" width="2" height="4.4" fill="#3c3f41"/><rect x="7.2" y="7.8" width="2" height="1.7" fill="#3c3f41"/></svg>
<svg style="left:66px;top:143.4px;" width="20" height="19" viewBox="0 0 20 19"><path d="M0 0 H7.3 L9.4 3.2 H18 V14 H0 Z" fill="#87939a"/><rect x="10.6" y="9.4" width="9.4" height="9.4" fill="#3c3f41"/><rect x="11.5" y="10.2" width="7.8" height="7.8" fill="#40b6e0"/></svg>
<svg style="left:89px;top:168.4px;" width="20" height="19" viewBox="0 0 20 19"><path d="M0 0 H7.3 L9.4 3.2 H18 V14 H0 Z" fill="#87939a"/></svg>
<svg style="left:89px;top:194.9px;" width="20" height="19" viewBox="0 0 20 19"><path d="M0 0 H7.3 L9.4 3.2 H18 V14 H0 Z" fill="#87939a"/><circle cx="14.6" cy="12" r="4.6" fill="#3c3f41"/><circle cx="14.6" cy="12" r="3.6" fill="#3ddc84"/></svg>
<svg style="left:112px;top:218.4px;" width="20" height="19" viewBox="0 0 20 19"><path d="M0 0 H7.3 L9.4 3.2 H18 V14 H0 Z" fill="#87939a"/></svg>
<svg style="left:112px;top:243.4px;" width="20" height="19" viewBox="0 0 20 19"><path d="M0 0 H7.3 L9.4 3.2 H18 V14 H0 Z" fill="#87939a"/></svg>
<svg style="left:135px;top:269.9px;" width="20" height="19" viewBox="0 0 20 19"><path d="M0 0 H7.3 L9.4 3.2 H18 V14 H0 Z" fill="#87939a"/><circle cx="14.6" cy="12" r="4.6" fill="#3c3f41"/><circle cx="14.6" cy="12" r="3.6" fill="#3ddc84"/></svg>
<svg style="left:135px;top:294.9px;" width="20" height="19" viewBox="0 0 20 19"><path d="M0 0 H7.3 L9.4 3.2 H18 V14 H0 Z" fill="#87939a"/><circle cx="14.6" cy="12" r="4.6" fill="#3c3f41"/><circle cx="14.6" cy="12" r="3.6" fill="#3ddc84"/></svg>
<svg style="left:158px;top:318.4px;" width="20" height="19" viewBox="0 0 20 19"><path d="M0 0 H7.3 L9.4 3.2 H18 V14 H0 Z" fill="#3e87a4"/></svg>
<svg style="left:181px;top:343.4px;" width="20" height="19" viewBox="0 0 20 19"><path d="M0 0 H7.3 L9.4 3.2 H18 V14 H0 Z" fill="#87939a"/><circle cx="6.6" cy="8.3" r="2.4" fill="#2f3335"/></svg>
<svg style="left:204px;top:364.4px;" width="20" height="23" viewBox="0 0 20 23"><circle cx="9" cy="11.5" r="9" fill="#3e8ba6"/><path d="M11.6 8.9 A3.7 3.7 0 1 0 11.6 13.6" fill="none" stroke="#2c4450" stroke-width="1.6"/><path d="M8.8 11.8 H19.2 V22.6 H8.8 Z" fill="#3c3f41"/><path d="M9.8 12.8 H18.9 L14.5 17.2 L18.9 21.7 H9.8 Z" fill="#bb93f5"/></svg>
<svg style="left:204px;top:389.4px;" width="20" height="23" viewBox="0 0 20 23"><circle cx="9" cy="11.5" r="9" fill="#3e8ba6"/><path d="M11.6 8.9 A3.7 3.7 0 1 0 11.6 13.6" fill="none" stroke="#2c4450" stroke-width="1.6"/><path d="M8.8 11.8 H19.2 V22.6 H8.8 Z" fill="#3c3f41"/><path d="M9.8 12.8 H18.9 L14.5 17.2 L18.9 21.7 H9.8 Z" fill="#bb93f5"/></svg>
<svg style="left:204px;top:414.4px;" width="20" height="23" viewBox="0 0 20 23"><circle cx="9" cy="11.5" r="9" fill="#3e8ba6"/><path d="M11.6 8.9 A3.7 3.7 0 1 0 11.6 13.6" fill="none" stroke="#2c4450" stroke-width="1.6"/><path d="M8.8 11.8 H19.2 V22.6 H8.8 Z" fill="#3c3f41"/><path d="M9.8 12.8 H18.9 L14.5 17.2 L18.9 21.7 H9.8 Z" fill="#bb93f5"/></svg>
<svg style="left:204px;top:439.4px;" width="20" height="23" viewBox="0 0 20 23"><circle cx="9" cy="11.5" r="9" fill="#3e8ba6"/><path d="M11.6 8.9 A3.7 3.7 0 1 0 11.6 13.6" fill="none" stroke="#2c4450" stroke-width="1.6"/><path d="M8.8 11.8 H19.2 V22.6 H8.8 Z" fill="#3c3f41"/><path d="M9.8 12.8 H18.9 L14.5 17.2 L18.9 21.7 H9.8 Z" fill="#bb93f5"/></svg>
<svg style="left:204px;top:464.4px;" width="20" height="23" viewBox="0 0 20 23"><circle cx="9" cy="11.5" r="9" fill="#3e8ba6"/><path d="M11.6 8.9 A3.7 3.7 0 1 0 11.6 13.6" fill="none" stroke="#2c4450" stroke-width="1.6"/><path d="M8.8 11.8 H19.2 V22.6 H8.8 Z" fill="#3c3f41"/><path d="M9.8 12.8 H18.9 L14.5 17.2 L18.9 21.7 H9.8 Z" fill="#bb93f5"/></svg>
<svg style="left:204px;top:489.4px;" width="20" height="23" viewBox="0 0 20 23"><circle cx="9" cy="11.5" r="9" fill="#3e8ba6"/><path d="M11.6 8.9 A3.7 3.7 0 1 0 11.6 13.6" fill="none" stroke="#2c4450" stroke-width="1.6"/><path d="M8.8 11.8 H19.2 V22.6 H8.8 Z" fill="#3c3f41"/><path d="M9.8 12.8 H18.9 L14.5 17.2 L18.9 21.7 H9.8 Z" fill="#bb93f5"/></svg>
<svg style="left:204px;top:514.4px;" width="20" height="23" viewBox="0 0 20 23"><circle cx="9" cy="11.5" r="9" fill="#3e8ba6"/><path d="M11.6 8.9 A3.7 3.7 0 1 0 11.6 13.6" fill="none" stroke="#2c4450" stroke-width="1.6"/><path d="M8.8 11.8 H19.2 V22.6 H8.8 Z" fill="#3c3f41"/><path d="M9.8 12.8 H18.9 L14.5 17.2 L18.9 21.7 H9.8 Z" fill="#bb93f5"/></svg>
<svg style="left:158px;top:543.4px;" width="20" height="19" viewBox="0 0 20 19"><path d="M0 0 H7.3 L9.4 3.2 H18 V14 H0 Z" fill="#87939a"/><rect x="10" y="7.6" width="10" height="11" fill="#3c3f41"/><rect x="11" y="8.7" width="8" height="1.5" fill="#e2a83e"/><rect x="11" y="11.2" width="8" height="1.5" fill="#e2a83e"/><rect x="11" y="13.7" width="8" height="1.5" fill="#e2a83e"/><rect x="11" y="16.2" width="8" height="1.5" fill="#e2a83e"/></svg>
<svg style="left:160.8px;top:566.8px;" width="13" height="10" viewBox="0 0 13 10"><path d="M4.2 0 H12.2 V9 H0 V4.2 Z" fill="#87939a"/><path d="M0 4.6 L4.6 0 V4.6 Z" fill="#87939a" opacity="0.55"/><path d="M4.9 0 V4.9 H0" fill="none" stroke="#3c3f41" stroke-width="0.9"/></svg>
<svg style="left:158px;top:577.0px;" width="19" height="9" viewBox="0 0 19 9"><rect width="19" height="8.8" fill="#3f9f5f"/><text x="2.6" y="7.6" font-family="Liberation Sans,sans-serif" font-size="8.6" font-weight="bold" fill="#1e3a2a" letter-spacing="0.6">MF</text></svg>
<svg style="left:135px;top:593.4px;" width="20" height="19" viewBox="0 0 20 19"><path d="M0 0 H7.3 L9.4 3.2 H18 V14 H0 Z" fill="#87939a"/><rect x="10.6" y="9.4" width="9.4" height="9.4" fill="#3c3f41"/><rect x="11.5" y="10.2" width="7.8" height="7.8" fill="#40b6e0"/></svg>
<svg style="left:115px;top:616.8px;" width="17" height="20" viewBox="0 0 17 20"><path d="M4.2 0 H12.2 V17.6 H0 V4.2 Z" fill="#87939a"/><path d="M0 4.6 L4.6 0 V4.6 Z" fill="#87939a" opacity="0.55"/><path d="M4.9 0 V4.9 H0" fill="none" stroke="#3c3f41" stroke-width="0.9"/><circle cx="10.3" cy="13.9" r="5.2" fill="#3c3f41"/><circle cx="10.3" cy="13.9" r="3.6" fill="none" stroke="#87939a" stroke-width="1.3"/><path d="M7.8 16.4 L12.8 11.4" stroke="#87939a" stroke-width="1.3"/></svg>
<svg style="left:111.7px;top:643.9px;" width="19" height="14" viewBox="0 0 19 14"><path d="M0.5 14 C0 8 2 3.5 7 3 C9 1.5 12 1.5 13.5 3.5 C14.5 5 15.5 5 16.3 3.8 C17 2.8 16.5 1.6 15.5 1.8 L15.2 0.6 C17.5 0 19 2 18 4.5 C17 7 14.5 8 13.5 7.8 L13.5 14 H10 V11.5 C9 12 8 12 7 11.5 V14 H4 V11 C3.5 11.5 3.3 13 3.3 14 Z" fill="#87939a"/><path d="M4.5 5.2 C5.5 6.6 7 6.6 8 5.4" fill="none" stroke="#0d293e" stroke-width="0.8"/></svg>
<svg style="left:114.6px;top:666.8px;" width="13" height="18" viewBox="0 0 13 18"><path d="M4.2 0 H12.2 V17.6 H0 V4.2 Z" fill="#87939a"/><path d="M0 4.6 L4.6 0 V4.6 Z" fill="#87939a" opacity="0.55"/><path d="M4.9 0 V4.9 H0" fill="none" stroke="#3c3f41" stroke-width="0.9"/><path d="M2.6 8.6 H9.6 M2.6 11 H9.6 M2.6 13.4 H7" stroke="#33393d" stroke-width="1.2"/></svg>
<svg style="left:92px;top:691.8px;" width="17" height="20" viewBox="0 0 17 20"><path d="M4.2 0 H12.2 V17.6 H0 V4.2 Z" fill="#87939a"/><path d="M0 4.6 L4.6 0 V4.6 Z" fill="#87939a" opacity="0.55"/><path d="M4.9 0 V4.9 H0" fill="none" stroke="#3c3f41" stroke-width="0.9"/><circle cx="10.3" cy="13.9" r="5.2" fill="#3c3f41"/><circle cx="10.3" cy="13.9" r="3.6" fill="none" stroke="#87939a" stroke-width="1.3"/><path d="M7.8 16.4 L12.8 11.4" stroke="#87939a" stroke-width="1.3"/></svg>
<svg style="left:88.7px;top:718.9px;" width="19" height="14" viewBox="0 0 19 14"><path d="M0.5 14 C0 8 2 3.5 7 3 C9 1.5 12 1.5 13.5 3.5 C14.5 5 15.5 5 16.3 3.8 C17 2.8 16.5 1.6 15.5 1.8 L15.2 0.6 C17.5 0 19 2 18 4.5 C17 7 14.5 8 13.5 7.8 L13.5 14 H10 V11.5 C9 12 8 12 7 11.5 V14 H4 V11 C3.5 11.5 3.3 13 3.3 14 Z" fill="#87939a"/><path d="M4.5 5.2 C5.5 6.6 7 6.6 8 5.4" fill="none" stroke="#3c3f41" stroke-width="0.8"/></svg>
<svg style="left:92px;top:741.8px;" width="17" height="20" viewBox="0 0 17 20"><path d="M4.2 0 H12.2 V17.6 H0 V4.2 Z" fill="#87939a"/><path d="M0 4.6 L4.6 0 V4.6 Z" fill="#87939a" opacity="0.55"/><path d="M4.9 0 V4.9 H0" fill="none" stroke="#3c3f41" stroke-width="0.9"/><rect x="5.2" y="7.5" width="12" height="12" fill="#3c3f41"/><rect x="6" y="13" width="2.8" height="6.2" fill="#f26522"/><rect x="9.6" y="10.3" width="2.8" height="8.9" fill="#fbb03b"/><rect x="13.4" y="8.2" width="2.8" height="11" fill="#62b543"/></svg>
<svg style="left:91.8px;top:766.8px;" width="13" height="10" viewBox="0 0 13 10"><path d="M4.2 0 H12.2 V9 H0 V4.2 Z" fill="#87939a"/><path d="M0 4.6 L4.6 0 V4.6 Z" fill="#87939a" opacity="0.55"/><path d="M4.9 0 V4.9 H0" fill="none" stroke="#3c3f41" stroke-width="0.9"/></svg>
<svg style="left:89px;top:777.0px;" width="19" height="9" viewBox="0 0 19 9"><rect width="19" height="8.8" fill="#a27fd0"/><text x="2.4" y="7.4" font-family="Liberation Sans,sans-serif" font-size="8.4" font-weight="bold" fill="#33284a" letter-spacing="0.2">C++</text></svg>
<svg style="left:91.6px;top:791.8px;" width="13" height="18" viewBox="0 0 13 18"><path d="M4.2 0 H12.2 V17.6 H0 V4.2 Z" fill="#87939a"/><path d="M0 4.6 L4.6 0 V4.6 Z" fill="#87939a" opacity="0.55"/><path d="M4.9 0 V4.9 H0" fill="none" stroke="#3c3f41" stroke-width="0.9"/><path d="M2.6 8.6 H9.6 M2.6 11 H9.6 M2.6 13.4 H7" stroke="#33393d" stroke-width="1.2"/></svg>
<svg style="left:92px;top:816.8px;" width="17" height="20" viewBox="0 0 17 20"><path d="M4.2 0 H12.2 V17.6 H0 V4.2 Z" fill="#87939a"/><path d="M0 4.6 L4.6 0 V4.6 Z" fill="#87939a" opacity="0.55"/><path d="M4.9 0 V4.9 H0" fill="none" stroke="#3c3f41" stroke-width="0.9"/><rect x="5.2" y="7.5" width="12" height="12" fill="#3c3f41"/><rect x="6" y="13" width="2.8" height="6.2" fill="#f26522"/><rect x="9.6" y="10.3" width="2.8" height="8.9" fill="#fbb03b"/><rect x="13.4" y="8.2" width="2.8" height="11" fill="#62b543"/></svg>
<svg style="left:88.7px;top:843.9px;" width="19" height="14" viewBox="0 0 19 14"><path d="M0.5 14 C0 8 2 3.5 7 3 C9 1.5 12 1.5 13.5 3.5 C14.5 5 15.5 5 16.3 3.8 C17 2.8 16.5 1.6 15.5 1.8 L15.2 0.6 C17.5 0 19 2 18 4.5 C17 7 14.5 8 13.5 7.8 L13.5 14 H10 V11.5 C9 12 8 12 7 11.5 V14 H4 V11 C3.5 11.5 3.3 13 3.3 14 Z" fill="#87939a"/><path d="M4.5 5.2 C5.5 6.6 7 6.6 8 5.4" fill="none" stroke="#3c3f41" stroke-width="0.8"/></svg>
<svg style="left:66px;top:866.6px;" width="19" height="16" viewBox="0 0 19 16"><rect x="0.2" y="3" width="2.5" height="12.5" fill="#87939a"/><rect x="4" y="3" width="2.5" height="12.5" fill="#62b543"/><rect x="7.7" y="0" width="2.5" height="15.5" fill="#87939a"/><rect x="11.5" y="3" width="2.5" height="12.5" fill="#40b6e0"/><rect x="15.3" y="5.5" width="2.5" height="10.0" fill="#87939a"/></svg>
<svg style="left:66px;top:891.6px;" width="20" height="21" viewBox="0 0 20 21"><rect x="0" y="0.6" width="13" height="11.6" fill="#87939a"/><path d="M2 2.6 L5.2 5.4 L2 8.2" fill="none" stroke="#33393d" stroke-width="1.2"/><circle cx="12.8" cy="12.8" r="7.1" fill="#3c3f41"/><circle cx="12.8" cy="12.8" r="6.1" fill="#40b6e0"/><path d="M12.5 9.2 V13 L14.6 15.4" fill="none" stroke="#2c4a58" stroke-width="1.4"/></svg>
<div style="left:690px;top:437px;width:1195px;height:27px;background:#323232;"></div>
<div style="left:618px;top:437px;width:72px;height:27px;background:#313335;"></div>
<div style="left:1697px;top:174px;width:1px;height:777px;background:#454545;"></div>
<div style="left:887px;top:842px;width:300px;height:27px;background:#52503a;"></div>
<div style="left:887px;top:869px;width:360px;height:27px;background:#52503a;"></div>
<div style="left:887px;top:896px;width:440px;height:27px;background:#52503a;"></div>
<div style="left:887px;top:923px;width:500px;height:27px;background:#52503a;"></div>
<div style="left:734px;top:174px;width:1px;height:47px;background:#3b3b3b;"></div>
<div style="left:854px;top:174px;width:1px;height:20px;background:#3b3b3b;"></div>
<div style="left:734px;top:275px;width:1px;height:108px;background:#3b3b3b;"></div>
<div style="left:774px;top:302px;width:1px;height:54px;background:#3b3b3b;"></div>
<div style="left:734px;top:437px;width:1px;height:54px;background:#3b3b3b;"></div>
<div style="left:734px;top:545px;width:1px;height:27px;background:#3b3b3b;"></div>
<div style="left:734px;top:626px;width:1px;height:27px;background:#3b3b3b;"></div>
<div style="left:618px;top:174px;width:1267px;height:777px;overflow:hidden">
<span class="c" style="left:5px;top:-6px;width:20px;text-align:right;color:#606366">21</span>
<span class="c" style="left:79px;top:-6px">                    jniLibs.srcDirs = [<i style="font-style:normal;color:#6a8759;">'lib'</i>]</span>
<span class="c" style="left:5px;top:21px;width:20px;text-align:right;color:#606366">22</span>
<span class="c" style="left:79px;top:21px">                }</span>
<span class="c" style="left:5px;top:48px;width:20px;text-align:right;color:#606366">23</span>
<span class="c" style="left:79px;top:48px">    }</span>
<span class="c" style="left:5px;top:75px;width:20px;text-align:right;color:#606366">24</span>
<span class="c" style="left:79px;top:75px">    <i style="font-style:normal;color:#9876aa;">buildTypes</i> {</span>
<span class="c" style="left:5px;top:102px;width:20px;text-align:right;color:#606366">25</span>
<span class="c" style="left:79px;top:102px">        release {</span>
<span class="c" style="left:5px;top:129px;width:20px;text-align:right;color:#606366">26</span>
<span class="c" style="left:79px;top:129px">            minifyEnabled <i style="font-style:normal;color:#cc7832;">false</i></span>
<span class="c" style="left:5px;top:156px;width:20px;text-align:right;color:#606366">27</span>
<span class="c" style="left:79px;top:156px">            proguardFiles getDefaultProguardFile(<i style="font-style:normal;color:#6a8759;">'proguard-android-optimize.txt'</i>), <i style="font-style:normal;color:#6a8759;">'proguard-rules.pro'</i></span>
<span class="c" style="left:5px;top:183px;width:20px;text-align:right;color:#606366">28</span>
<span class="c" style="left:79px;top:183px">        }</span>
<span class="c" style="left:5px;top:210px;width:20px;text-align:right;color:#606366">29</span>
<span class="c" style="left:79px;top:210px">    }</span>
<span class="c" style="left:5px;top:237px;width:20px;text-align:right;color:#606366">30</span>
<span class="c" style="left:79px;top:237px">    compileOptions {</span>
<span class="c" style="left:5px;top:264px;width:20px;text-align:right;color:#a4a3a3">31</span>
<span class="c" style="left:79px;top:264px">        sourceCompatibility JavaVersion.<i style="color:#9876aa;font-style:italic;">VERSION_1_8</i></span>
<span class="c" style="left:5px;top:291px;width:20px;text-align:right;color:#606366">32</span>
<span class="c" style="left:79px;top:291px">        targetCompatibility JavaVersion.<i style="color:#9876aa;font-style:italic;">VERSION_1_8</i></span>
<span class="c" style="left:5px;top:318px;width:20px;text-align:right;color:#606366">33</span>
<span class="c" style="left:79px;top:318px">    }</span>
<span class="c" style="left:5px;top:345px;width:20px;text-align:right;color:#606366">34</span>
<span class="c" style="left:79px;top:345px">    kotlinOptions {</span>
<span class="c" style="left:5px;top:372px;width:20px;text-align:right;color:#606366">35</span>
<span class="c" style="left:79px;top:372px">        jvmTarget = <i style="font-style:normal;color:#6a8759;">'1.8'</i></span>
<span class="c" style="left:5px;top:399px;width:20px;text-align:right;color:#606366">36</span>
<span class="c" style="left:79px;top:399px">    }</span>
<span class="c" style="left:5px;top:426px;width:20px;text-align:right;color:#606366">37</span>
<span class="c" style="left:79px;top:426px">    <i style="font-style:normal;color:#9876aa;">viewBinding</i> {</span>
<span class="c" style="left:5px;top:453px;width:20px;text-align:right;color:#606366">38</span>
<span class="c" style="left:79px;top:453px">        enabled = <i style="font-style:normal;color:#cc7832;">true</i></span>
<span class="c" style="left:5px;top:480px;width:20px;text-align:right;color:#606366">39</span>
<span class="c" style="left:79px;top:480px">    }</span>
<span class="c" style="left:5px;top:507px;width:20px;text-align:right;color:#606366">40</span>
<span class="c" style="left:79px;top:507px">}</span>
<span class="c" style="left:5px;top:534px;width:20px;text-align:right;color:#606366">41</span>
<span class="c" style="left:5px;top:561px;width:20px;text-align:right;color:#606366">42</span>
<span class="c" style="left:79px;top:561px">dependencies {</span>
<span class="c" style="left:5px;top:588px;width:20px;text-align:right;color:#606366">43</span>
<span class="c" style="left:5px;top:615px;width:20px;text-align:right;color:#606366">44</span>
<span class="c" style="left:5px;top:642px;width:20px;text-align:right;color:#606366">45</span>
<span class="c" style="left:5px;top:669px;width:20px;text-align:right;color:#606366">46</span>
<span class="c" style="left:79px;top:669px">    implementation <i style="font-style:normal;color:#6a8759;">'androidx.core:core-ktx:1.7.0'</i></span>
<span class="c" style="left:5px;top:696px;width:20px;text-align:right;color:#606366">47</span>
<span class="c" style="left:79px;top:696px">    implementation <i style="font-style:normal;color:#6a8759;">'androidx.appcompat:appcompat:1.4.2'</i></span>
<span class="c" style="left:5px;top:723px;width:20px;text-align:right;color:#606366">48</span>
<span class="c" style="left:79px;top:723px">    implementation <i style="font-style:normal;color:#6a8759;">'com.google.android.material:material:1.6.1'</i></span>
<span class="c" style="left:5px;top:750px;width:20px;text-align:right;color:#606366">49</span>
<span class="c" style="left:79px;top:750px">    implementation <i style="font-style:normal;color:#6a8759;">'androidx.constraintlayout:constraintlayout:2.0.4'</i></span>
</div>
<svg style="left:683px;top:197.5px;" width="13" height="22" viewBox="0 0 13 22"><g transform="translate(6.5,10)"><path d="M-5 6.3 H5 V-3 L0 -7.7 L-5 -3 Z" fill="#2d2d2e" stroke="#5c5f61" stroke-width="1"/><path d="M-3 0.9 H3" stroke="#5c5f61" stroke-width="1"/></g></svg>
<svg style="left:683px;top:224.5px;" width="13" height="22" viewBox="0 0 13 22"><g transform="translate(6.5,10)"><path d="M-5 6.3 H5 V-3 L0 -7.7 L-5 -3 Z" fill="#2d2d2e" stroke="#5c5f61" stroke-width="1"/><path d="M-3 0.9 H3" stroke="#5c5f61" stroke-width="1"/></g></svg>
<svg style="left:683px;top:359.5px;" width="13" height="22" viewBox="0 0 13 22"><g transform="translate(6.5,10)"><path d="M-5 6.3 H5 V-3 L0 -7.7 L-5 -3 Z" fill="#2d2d2e" stroke="#5c5f61" stroke-width="1"/><path d="M-3 0.9 H3" stroke="#5c5f61" stroke-width="1"/></g></svg>
<svg style="left:683px;top:386.5px;" width="13" height="22" viewBox="0 0 13 22"><g transform="translate(6.5,10)"><path d="M-5 6.3 H5 V-3 L0 -7.7 L-5 -3 Z" fill="#2d2d2e" stroke="#5c5f61" stroke-width="1"/><path d="M-3 0.9 H3" stroke="#5c5f61" stroke-width="1"/></g></svg>
<svg style="left:683px;top:494.5px;" width="13" height="22" viewBox="0 0 13 22"><g transform="translate(6.5,10)"><path d="M-5 6.3 H5 V-3 L0 -7.7 L-5 -3 Z" fill="#2d2d2e" stroke="#5c5f61" stroke-width="1"/><path d="M-3 0.9 H3" stroke="#5c5f61" stroke-width="1"/></g></svg>
<svg style="left:683px;top:575.5px;" width="13" height="22" viewBox="0 0 13 22"><g transform="translate(6.5,10)"><path d="M-5 6.3 H5 V-3 L0 -7.7 L-5 -3 Z" fill="#2d2d2e" stroke="#5c5f61" stroke-width="1"/><path d="M-3 0.9 H3" stroke="#5c5f61" stroke-width="1"/></g></svg>
<svg style="left:683px;top:656.5px;" width="13" height="22" viewBox="0 0 13 22"><g transform="translate(6.5,10)"><path d="M-5 6.3 H5 V-3 L0 -7.7 L-5 -3 Z" fill="#2d2d2e" stroke="#5c5f61" stroke-width="1"/><path d="M-3 0.9 H3" stroke="#5c5f61" stroke-width="1"/></g></svg>
<svg style="left:683px;top:683.5px;" width="13" height="22" viewBox="0 0 13 22"><g transform="translate(6.5,10)"><path d="M-5 6.3 H5 V-3 L0 -7.7 L-5 -3 Z" fill="#2d2d2e" stroke="#5c5f61" stroke-width="1"/><path d="M-3 0.9 H3" stroke="#5c5f61" stroke-width="1"/></g></svg>
<svg style="left:683px;top:251.5px;" width="13" height="22" viewBox="0 0 13 22"><g transform="translate(6.5,10)"><path d="M-5 -4 H5 V4 L0 9.5 L-5 4 Z" fill="#2d2d2e" stroke="#5c5f61" stroke-width="1"/><path d="M-3 0.9 H3" stroke="#5c5f61" stroke-width="1"/></g></svg>
<svg style="left:683px;top:278.5px;" width="13" height="22" viewBox="0 0 13 22"><g transform="translate(6.5,10)"><path d="M-5 -4 H5 V4 L0 9.5 L-5 4 Z" fill="#2d2d2e" stroke="#5c5f61" stroke-width="1"/><path d="M-3 0.9 H3" stroke="#5c5f61" stroke-width="1"/></g></svg>
<svg style="left:683px;top:413.5px;" width="13" height="22" viewBox="0 0 13 22"><g transform="translate(6.5,10)"><path d="M-5 -4 H5 V4 L0 9.5 L-5 4 Z" fill="#2d2d2e" stroke="#5c5f61" stroke-width="1"/><path d="M-3 0.9 H3" stroke="#5c5f61" stroke-width="1"/></g></svg>
<svg style="left:683px;top:521.5px;" width="13" height="22" viewBox="0 0 13 22"><g transform="translate(6.5,10)"><path d="M-5 -4 H5 V4 L0 9.5 L-5 4 Z" fill="#2d2d2e" stroke="#5c5f61" stroke-width="1"/><path d="M-3 0.9 H3" stroke="#5c5f61" stroke-width="1"/></g></svg>
<svg style="left:683px;top:602.5px;" width="13" height="22" viewBox="0 0 13 22"><g transform="translate(6.5,10)"><path d="M-5 -4 H5 V4 L0 9.5 L-5 4 Z" fill="#2d2d2e" stroke="#5c5f61" stroke-width="1"/><path d="M-3 0.9 H3" stroke="#5c5f61" stroke-width="1"/></g></svg>
<svg style="left:683px;top:737.5px;" width="13" height="22" viewBox="0 0 13 22"><g transform="translate(6.5,10)"><path d="M-5 -4 H5 V4 L0 9.5 L-5 4 Z" fill="#2d2d2e" stroke="#5c5f61" stroke-width="1"/><path d="M-3 0.9 H3" stroke="#5c5f61" stroke-width="1"/></g></svg>
<div style="left:1873px;top:425px;width:11px;height:302px;background:#4c4c4c;"></div>
<div style="left:1867px;top:685px;width:18px;height:3px;background:#c9a227;"></div>
<div style="left:1867px;top:695px;width:18px;height:3px;background:#c9a227;"></div>
<div style="left:1867px;top:706px;width:18px;height:3px;background:#c9a227;"></div>
<div style="left:1867px;top:717px;width:18px;height:3px;background:#c9a227;"></div>
<div style="left:1867px;top:738px;width:18px;height:3px;background:#c9a227;"></div>
<div style="left:1867px;top:833px;width:18px;height:3px;background:#c9a227;"></div>
<div style="left:1867px;top:304px;width:18px;height:3px;background:#2f8bc6;"></div>
<span class="t" style="left:52px;top:5.5px;font-size:16.5px;letter-spacing:-0.146px;color:#bbbbbb"><u>F</u>ile</span>
<span class="t" style="left:93px;top:5.5px;font-size:16.5px;letter-spacing:0.142px;color:#bbbbbb"><u>E</u>dit</span>
<span class="t" style="left:136px;top:5.5px;font-size:16.5px;letter-spacing:0.384px;color:#bbbbbb"><u>V</u>iew</span>
<span class="t" style="left:187px;top:5.5px;font-size:16.5px;letter-spacing:0.360px;color:#bbbbbb"><u>N</u>avigate</span>
<span class="t" style="left:270px;top:5.5px;font-size:16.5px;letter-spacing:0.139px;color:#bbbbbb"><u>C</u>ode</span>
<span class="t" style="left:325px;top:5.5px;font-size:16.5px;letter-spacing:0.206px;color:#bbbbbb"><u>R</u>efactor</span>
<span class="t" style="left:404px;top:5.5px;font-size:16.5px;letter-spacing:0.262px;color:#bbbbbb"><u>B</u>uild</span>
<span class="t" style="left:457px;top:5.5px;font-size:16.5px;letter-spacing:-0.089px;color:#bbbbbb">R<u>u</u>n</span>
<span class="t" style="left:502px;top:5.5px;font-size:16.5px;letter-spacing:0.297px;color:#bbbbbb"><u>T</u>ools</span>
<span class="t" style="left:557px;top:5.5px;font-size:16.5px;letter-spacing:-0.976px;color:#bbbbbb">VC<u>S</u></span>
<span class="t" style="left:602px;top:5.5px;font-size:16.5px;letter-spacing:0.719px;color:#bbbbbb"><u>W</u>indow</span>
<span class="t" style="left:679px;top:5.5px;font-size:16.5px;letter-spacing:0.267px;color:#bbbbbb"><u>H</u>elp</span>
<span class="t" style="left:752px;top:5.5px;font-size:16.5px;letter-spacing:0.379px;color:#878787;">traslateSdk [...\android_demo_composition_correction\traslateSdk] - build.gradle (:yd-composition-correction-demo)</span>
<svg style="left:1783px;top:8px;" width="24" height="14" viewBox="0 0 24 14"><path d="M7 6.5 H17" stroke="#a0a0a0" stroke-width="1"/></svg>
<svg style="left:1830px;top:5px;" width="22" height="18" viewBox="0 0 22 18"><rect x="6.5" y="4.5" width="9" height="9" fill="none" stroke="#a0a0a0" stroke-width="1"/></svg>
<svg style="left:1877px;top:5px;" width="22" height="18" viewBox="0 0 22 18"><path d="M6 4 L16 14 M16 4 L6 14" stroke="#a0a0a0" stroke-width="1"/></svg>
<div style="left:242px;top:42px;width:324px;height:27px;background:transparent;border:1px solid #5e6060;border-radius:4px;box-sizing:border-box"></div>
<div style="left:573px;top:42px;width:223px;height:27px;background:transparent;border:1px solid #5e6060;border-radius:4px;box-sizing:border-box"></div>
<span class="t" style="left:279px;top:43px;font-size:16.5px;letter-spacing:0.611px;color:#bbbbbb;">yd-composition-correction-demo</span>
<span class="t" style="left:610px;top:43px;font-size:16.5px;letter-spacing:0.155px;color:#bbbbbb;">HUAWEI MHA-AL00</span>
<svg style="left:541.5px;top:51.5px;" width="14" height="9" viewBox="0 0 14 9"><path d="M1 1 H12 L6.5 7.5 Z" fill="#9a9da0"/></svg>
<svg style="left:772px;top:51.5px;" width="14" height="9" viewBox="0 0 14 9"><path d="M1 1 H12 L6.5 7.5 Z" fill="#9a9da0"/></svg>
<div style="left:117px;top:43px;width:1px;height:24px;background:#555759;"></div>
<div style="left:1078px;top:43px;width:1px;height:24px;background:#555759;"></div>
<div style="left:1189px;top:43px;width:1px;height:24px;background:#555759;"></div>
<span class="t" style="left:24px;top:77.5px;font-size:16.5px;letter-spacing:0.277px;color:#bbbbbb;font-weight:bold;">traslateSdk</span>
<span class="t" style="left:137px;top:77.5px;font-size:16.5px;letter-spacing:0.517px;color:#bbbbbb;font-weight:bold;">yd-composition-correction-demo</span>
<span class="t" style="left:452px;top:77.5px;font-size:16.5px;letter-spacing:0.391px;color:#bbbbbb;">build.gradle</span>
<svg style="left:119px;top:79px;" width="12" height="20" viewBox="0 0 12 20"><path d="M3 2 L9 10 L3 18" fill="none" stroke="#6d7072" stroke-width="1"/></svg>
<svg style="left:414px;top:79px;" width="12" height="20" viewBox="0 0 12 20"><path d="M3 2 L9 10 L3 18" fill="none" stroke="#6d7072" stroke-width="1"/></svg>
<span class="t" style="left:75px;top:109.5px;font-size:16.5px;letter-spacing:0.093px;color:#bbbbbb;">Project</span>
<svg style="left:141px;top:118px;" width="14" height="9" viewBox="0 0 14 9"><path d="M1 1 H12 L6.5 7.5 Z" fill="#afb1b3"/></svg>
<span class="t" style="left:650px;top:110px;font-size:16.5px;letter-spacing:0.555px;color:#bbbbbb;">MyApplication.kt</span>
<span class="t" style="left:836px;top:110px;font-size:16.5px;letter-spacing:0.476px;color:#bbbbbb;">build.gradle (:yd-composition-correction-demo)</span>
<svg style="left:785px;top:116px;" width="12" height="12" viewBox="0 0 12 12"><path d="M2 2 L10 10 M10 2 L2 10" stroke="#6e7173" stroke-width="1.2"/></svg>
<svg style="left:1206px;top:116px;" width="12" height="12" viewBox="0 0 12 12"><path d="M2 2 L10 10 M10 2 L2 10" stroke="#7b7f82" stroke-width="1.2"/></svg>
<span class="t" style="left:631px;top:144.5px;font-size:16.5px;letter-spacing:0.454px;color:#bbbbbb;">You can use the Project Structure dialog to view and edit your project configuration</span>
<span class="t" style="left:1528px;top:144.5px;font-size:16.5px;letter-spacing:0.488px;color:#589df6;">Open (Ctrl+Alt+Shift+S)</span>
<span class="t" style="left:1737px;top:144.5px;font-size:16.5px;letter-spacing:0.565px;color:#589df6;">Hide notification</span>
<svg style="left:1796px;top:183px;" width="16" height="15" viewBox="0 0 16 15"><path d="M8 1 L15 14 H1 Z" fill="#d8a520"/><path d="M8 5.5 V10" stroke="#2b2b2b" stroke-width="1.8"/><rect x="7.1" y="11" width="1.8" height="1.8" fill="#2b2b2b"/></svg>
<span class="t" style="left:1815px;top:179px;font-size:16.5px;color:#bbbbbb;">6</span>
<svg style="left:1836px;top:185px;" width="12" height="12" viewBox="0 0 12 12"><path d="M1.5 8 L6 3.5 L10.5 8" fill="none" stroke="#afb1b3" stroke-width="1.6"/></svg>
<svg style="left:1863px;top:185px;" width="12" height="12" viewBox="0 0 12 12"><path d="M1.5 4 L6 8.5 L10.5 4" fill="none" stroke="#afb1b3" stroke-width="1.6"/></svg>
<span class="t" style="left:699px;top:953px;font-size:16.5px;letter-spacing:0.326px;color:#bbbbbb;">android{}</span>
<span class="t" style="left:792px;top:953px;font-size:16.5px;letter-spacing:0.329px;color:#bbbbbb;">compileOptions{}</span>
<svg style="left:776px;top:959px;" width="10" height="12" viewBox="0 0 10 12"><path d="M3.5 2.5 L7 6 L3.5 9.5" fill="none" stroke="#6d7072" stroke-width="1.2"/></svg>
<span class="t" style="left:65px;top:981px;font-size:14px;letter-spacing:-0.047px;color:#bbbbbb;">TODO</span>
<span class="t" style="left:150px;top:981px;font-size:14px;letter-spacing:-0.266px;color:#bbbbbb;">Problems</span>
<span class="t" style="left:253px;top:981px;font-size:14px;letter-spacing:0.019px;color:#bbbbbb;">Version Control</span>
<span class="t" style="left:396px;top:981px;font-size:14px;letter-spacing:-0.113px;color:#bbbbbb;">Terminal</span>
<span class="t" style="left:492px;top:981px;font-size:14px;letter-spacing:-0.226px;color:#bbbbbb;">Build</span>
<span class="t" style="left:566px;top:981px;font-size:14px;letter-spacing:-0.005px;color:#bbbbbb;">Logcat</span>
<span class="t" style="left:652px;top:981px;font-size:14px;letter-spacing:-0.043px;color:#bbbbbb;">Profiler</span>
<span class="t" style="left:743px;top:981px;font-size:14px;letter-spacing:0.028px;color:#bbbbbb;">App Inspection</span>
<span class="t" style="left:886px;top:981px;font-size:14px;letter-spacing:-0.313px;color:#bbbbbb;">Device File Explorer</span>
<span class="t" style="left:1657px;top:981px;font-size:14px;letter-spacing:-0.227px;color:#bbbbbb;">Event Log</span>
<span class="t" style="left:1766px;top:981px;font-size:14px;letter-spacing:0.031px;color:#bbbbbb;">Layout Inspector</span>
<span class="t" style="left:41px;top:1007px;font-size:16.5px;letter-spacing:0.361px;color:#bbbbbb;">Cannot reach ADB server, attempting to reconnect. (2 minutes ago)</span>
<span class="t" style="left:1477px;top:1007px;font-size:16.5px;letter-spacing:-0.257px;color:#bbbbbb;">31:52</span>
<span class="t" style="left:1533px;top:1007px;font-size:16.5px;letter-spacing:-1.521px;color:#bbbbbb;">CRLF</span>
<span class="t" style="left:1587px;top:1007px;font-size:16.5px;letter-spacing:-0.148px;color:#bbbbbb;">UTF-8</span>
<span class="t" style="left:1649px;top:1007px;font-size:16.5px;letter-spacing:-0.255px;color:#bbbbbb;">4 spaces</span>
<div style="left:1781px;top:1007px;width:10.5px;height:24px;background:#696b6d;"></div>
<div style="left:1791.5px;top:1007px;width:5px;height:24px;background:#595b5d;"></div>
<span class="t" style="left:1791px;top:1007px;font-size:16.5px;letter-spacing:0.342px;color:#bbbbbb;">565 of 6000M</span>
<span class="t" style="left:21px;top:160px;font-size:14px;letter-spacing:0.347px;color:#ffffff;transform-origin:0 0;transform:rotate(-90deg) translate(0,-12px)">Project</span>
<span class="t" style="left:21px;top:321px;font-size:14px;letter-spacing:-0.160px;color:#bbbbbb;transform-origin:0 0;transform:rotate(-90deg) translate(0,-12px)">Resource Manager</span>
<span class="t" style="left:21px;top:712px;font-size:14px;letter-spacing:-0.088px;color:#bbbbbb;transform-origin:0 0;transform:rotate(-90deg) translate(0,-12px)">Structure</span>
<span class="t" style="left:21px;top:813px;font-size:14px;letter-spacing:-0.508px;color:#bbbbbb;transform-origin:0 0;transform:rotate(-90deg) translate(0,-12px)">Favorites</span>
<span class="t" style="left:21px;top:944px;font-size:14px;letter-spacing:-0.167px;color:#bbbbbb;transform-origin:0 0;transform:rotate(-90deg) translate(0,-12px)">Build Variants</span>
<span class="t" style="left:1899px;top:137px;font-size:14px;letter-spacing:-0.670px;color:#bbbbbb;transform-origin:0 0;transform:rotate(90deg) translate(0,-12px)">Gradle</span>
<span class="t" style="left:1899px;top:222px;font-size:14px;letter-spacing:-0.138px;color:#bbbbbb;transform-origin:0 0;transform:rotate(90deg) translate(0,-12px)">Device Manager</span>
<span class="t" style="left:1899px;top:913px;font-size:14px;letter-spacing:-0.252px;color:#bbbbbb;transform-origin:0 0;transform:rotate(90deg) translate(0,-12px)">Emulator</span>
<svg style="left:705.2px;top:437.4px;" width="16" height="19" viewBox="0 0 16 19"><path d="M8 0.8 A6.3 6.3 0 0 0 4 11.8 C4.8 12.6 5 13 5 13.6 H11 C11 13 11.2 12.6 12 11.8 A6.3 6.3 0 0 0 8 0.8 Z" fill="#efa834"/><rect x="5" y="14.4" width="6" height="1.4" fill="#b8b8b8"/><rect x="5.8" y="16.6" width="4.4" height="1.3" fill="#b8b8b8"/></svg>
<svg style="left:653px;top:740px;" width="14" height="14" viewBox="0 0 14 14"><path d="M1.2 0.8 L12.6 7 L1.2 13.2 Z" fill="#499c54"/></svg>
<div style="left:1651px;top:908px;width:212px;height:32px;background:#aaaaaa;"></div>
<div style="left:1657px;top:915px;width:1px;height:18px;background:#6f6f6f;"></div>
<div style="left:1660px;top:915px;width:1px;height:18px;background:#6f6f6f;"></div>
<span class="t" style="left:1673px;top:913px;font-size:19.5px;color:#111;font-family:'Liberation Sans','Noto Sans CJK SC',sans-serif">中</span>
<span class="t" style="left:1769px;top:913px;font-size:19.5px;color:#111;font-family:'Liberation Sans','Noto Sans CJK SC',sans-serif">简</span>
<svg style="left:1703px;top:912px;" width="24" height="24" viewBox="0 0 24 24"><path d="M14.5 3.2 A9.2 9.2 0 1 1 3.6 14.6 A7.6 7.6 0 0 0 14.5 3.2 Z" fill="none" stroke="#222" stroke-width="1.4"/></svg>
<svg style="left:1735px;top:912px;" width="28" height="24" viewBox="0 0 28 24"><circle cx="7" cy="8.2" r="2.3" fill="none" stroke="#1c1c1c" stroke-width="1.2"/><circle cx="16.2" cy="13.4" r="2.7" fill="#1c1c1c"/><path d="M18.9 13.4 C19.2 17 16.8 19.6 13 21 C15.6 18.8 16 17 15.4 15.6 Z" fill="#1c1c1c"/></svg>
<svg style="left:1799px;top:912px;" width="24" height="24" viewBox="0 0 24 24"><circle cx="12" cy="12" r="9" fill="none" stroke="#222" stroke-width="1.3"/><circle cx="8.8" cy="9.3" r="1.2" fill="#222"/><circle cx="15.2" cy="9.3" r="1.2" fill="#222"/><path d="M7 13.6 A5.4 5.4 0 0 0 17 13.6" fill="none" stroke="#222" stroke-width="1.3"/></svg>
<svg style="left:1831px;top:912px;" width="24" height="24" viewBox="0 0 24 24"><g transform="translate(12,12)"><path d="M-2 -9.6 H2 L2.6 -6.4 H-2.6 Z" transform="rotate(0)" fill="none" stroke="#222" stroke-width="1.1"/><path d="M-2 -9.6 H2 L2.6 -6.4 H-2.6 Z" transform="rotate(45)" fill="none" stroke="#222" stroke-width="1.1"/><path d="M-2 -9.6 H2 L2.6 -6.4 H-2.6 Z" transform="rotate(90)" fill="none" stroke="#222" stroke-width="1.1"/><path d="M-2 -9.6 H2 L2.6 -6.4 H-2.6 Z" transform="rotate(135)" fill="none" stroke="#222" stroke-width="1.1"/><path d="M-2 -9.6 H2 L2.6 -6.4 H-2.6 Z" transform="rotate(180)" fill="none" stroke="#222" stroke-width="1.1"/><path d="M-2 -9.6 H2 L2.6 -6.4 H-2.6 Z" transform="rotate(225)" fill="none" stroke="#222" stroke-width="1.1"/><path d="M-2 -9.6 H2 L2.6 -6.4 H-2.6 Z" transform="rotate(270)" fill="none" stroke="#222" stroke-width="1.1"/><path d="M-2 -9.6 H2 L2.6 -6.4 H-2.6 Z" transform="rotate(315)" fill="none" stroke="#222" stroke-width="1.1"/><circle r="6.6" fill="#aaaaaa" stroke="none"/><circle r="6.9" fill="none" stroke="#222" stroke-width="1.1" stroke-dasharray="2.6 2.82" stroke-dashoffset="1.3" transform="rotate(0)"/><circle r="3" fill="none" stroke="#222" stroke-width="1.2"/></g></svg>
<div style="left:229px;top:30px;width:633px;height:53.7px;background:transparent;border:3.4px solid #e60012;box-sizing:border-box"></div>
<div style="left:802.5px;top:33px;width:36.5px;height:46.3px;background:transparent;border:3.2px solid #e60012;box-sizing:border-box"></div>
</div></body></html>
